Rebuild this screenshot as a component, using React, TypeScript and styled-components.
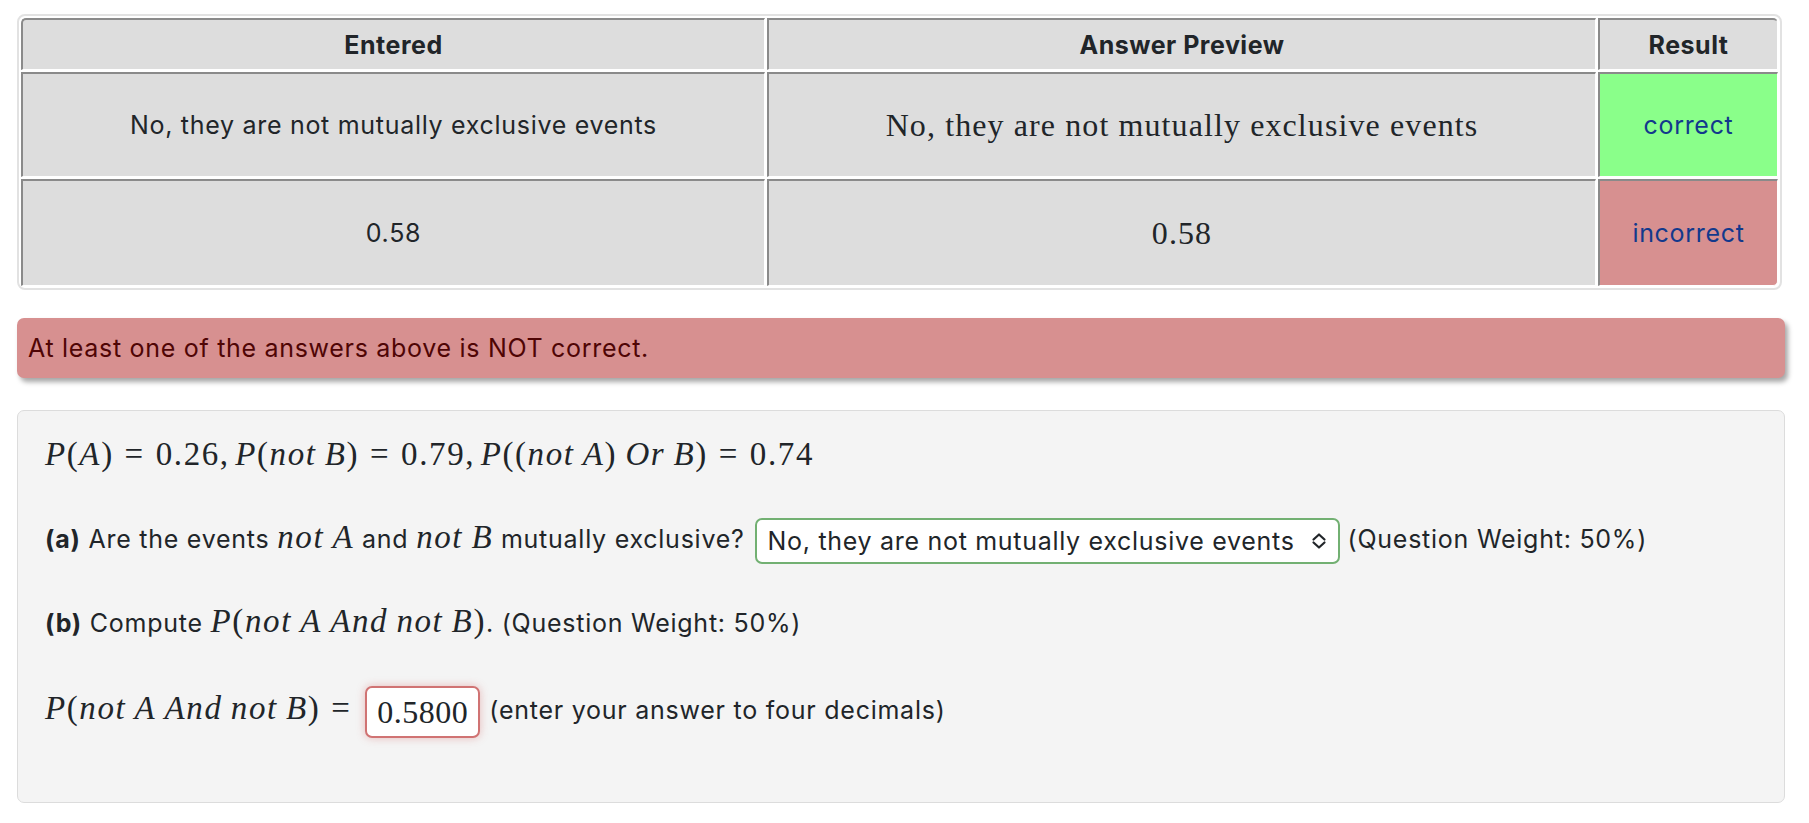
import styled, { createGlobalStyle } from "styled-components";

const GlobalStyle = createGlobalStyle`
  body {
    margin: 0;
    padding: 14px 0 0 17px;
    background: #ffffff;
    font-family: "Inter", "Liberation Sans", sans-serif;
    color: #212529;
  }
`;

const Page = styled.div`
  width: 1768px;
`;

const ResultsTable = styled.table`
  border-collapse: separate;
  border-spacing: 2px;
  border: 2px solid #e2e2e2;
  border-radius: 8px;
  width: 1765px;
  table-layout: fixed;
`;

const HeadCell = styled.th<{ $w?: number }>`
  width: ${(p) => (p.$w ? `${p.$w}px` : "auto")};
  height: 52px;
  padding: 0;
  background: #dddddd;
  border-top: 2px solid #8a8a8a;
  border-left: 2px solid #8a8a8a;
  border-right: 1px solid #ffffff;
  border-bottom: 1px solid #ffffff;
  font-size: 25px;
  letter-spacing: 0.5px;
  font-weight: 700;
  text-align: center;
  box-sizing: border-box;

  &:first-child {
    border-top-left-radius: 5px;
  }
  &:last-child {
    border-top-right-radius: 5px;
  }
`;

const Cell = styled.td<{ $h: number; $bg?: string; $serif?: boolean }>`
  height: ${(p) => p.$h}px;
  padding: 0;
  background: ${(p) => p.$bg || "#dddddd"};
  border-top: 2px solid #8a8a8a;
  border-left: 2px solid #8a8a8a;
  border-right: 1px solid #ffffff;
  border-bottom: 1px solid #ffffff;
  text-align: center;
  box-sizing: border-box;
  font-family: ${(p) =>
    p.$serif ? `"Liberation Serif", serif` : `"Inter", "Liberation Sans", sans-serif`};
  font-size: ${(p) => (p.$serif ? "32px" : "25px")};
  letter-spacing: ${(p) => (p.$serif ? "1.1px" : "0.7px")};
  color: ${(p) => (p.$bg ? "#12398c" : "#212529")};
`;

const LastRow = styled.tr`
  td:last-child {
    border-bottom-right-radius: 5px;
  }
`;

const Alert = styled.div`
  margin-top: 28px;
  height: 60px;
  box-sizing: border-box;
  padding: 0 11px;
  display: flex;
  align-items: center;
  background: #d79090;
  color: #4f0505;
  border-radius: 7px;
  box-shadow: 3px 4px 5px rgba(0, 0, 0, 0.35);
  font-size: 25px;
  letter-spacing: 0.7px;
`;

const Well = styled.div`
  margin-top: 32px;
  height: 393px;
  box-sizing: border-box;
  padding: 20px 27px 0;
  background: #f4f4f4;
  border: 1px solid #dcdcdc;
  border-radius: 7px;
  display: flex;
  flex-direction: column;
`;

const Line = styled.div<{ $h: number; $gap?: number }>`
  height: ${(p) => p.$h}px;
  margin-top: ${(p) => p.$gap || 0}px;
  display: flex;
  align-items: center;
  font-size: 25px;
  letter-spacing: 0.75px;
  white-space: nowrap;
`;

const Math = styled.span`
  font-family: "Liberation Serif", serif;
  font-size: 33px;
  letter-spacing: 1.6px;
`;

const Mi = styled.i`
  font-style: italic;
`;

const Rel = styled.span`
  margin: 0 0.33em;
`;

const Comma = styled.span`
  margin-right: 0.1667em;
`;

const Sp = styled.span`
  display: inline-block;
  width: 0.25em;
`;

const Label = styled.b`
  font-weight: 700;
`;

const SelectWrap = styled.span`
  position: relative;
  display: inline-block;
  vertical-align: middle;
  margin: 0 8px 0 10px;
`;

const Select = styled.select`
  appearance: none;
  width: 585px;
  height: 46px;
  box-sizing: border-box;
  padding: 0 40px 0 11px;
  background: #ffffff;
  border: 2px solid #72b072;
  border-radius: 7px;
  font-family: "Inter", "Liberation Sans", sans-serif;
  font-size: 25px;
  letter-spacing: 0.7px;
  color: #212529;
`;

const SelectIcon = styled.svg`
  position: absolute;
  right: 12px;
  top: 14px;
  width: 18px;
  height: 18px;
  pointer-events: none;
`;

const AnswerInput = styled.input`
  width: 115px;
  height: 52px;
  box-sizing: border-box;
  margin: 0 9px 0 3px;
  vertical-align: middle;
  text-align: center;
  background: #ffffff;
  border: 2px solid #d07373;
  border-radius: 7px;
  box-shadow: 0 0 8px rgba(205, 80, 80, 0.35);
  font-family: "Liberation Serif", serif;
  font-size: 32px;
  letter-spacing: 0.5px;
  color: #212529;
  padding: 0;
`;

const notA = (
  <>
    <Mi>not</Mi>
    <Sp />
    <Mi>A</Mi>
  </>
);

const notB = (
  <>
    <Mi>not</Mi>
    <Sp />
    <Mi>B</Mi>
  </>
);

const bothNot = (
  <>
    <Mi>P</Mi>(<Mi>not</Mi>
    <Sp />
    <Mi>A</Mi>
    <Sp />
    <Mi>And</Mi>
    <Sp />
    <Mi>not</Mi>
    <Sp />
    <Mi>B</Mi>)
  </>
);

const App = () => {
  return (
    <Page>
      <GlobalStyle />
      <ResultsTable>
        <thead>
          <tr>
            <HeadCell $w={744}>Entered</HeadCell>
            <HeadCell $w={829}>Answer Preview</HeadCell>
            <HeadCell>Result</HeadCell>
          </tr>
        </thead>
        <tbody>
          <tr>
            <Cell $h={105}>No, they are not mutually exclusive events</Cell>
            <Cell $h={105} $serif>
              No, they are not mutually exclusive events
            </Cell>
            <Cell $h={105} $bg="#8aff8a">
              correct
            </Cell>
          </tr>
          <LastRow>
            <Cell $h={107}>0.58</Cell>
            <Cell $h={107} $serif>
              0.58
            </Cell>
            <Cell $h={107} $bg="#d79090">
              incorrect
            </Cell>
          </LastRow>
        </tbody>
      </ResultsTable>

      <Alert>At least one of the answers above is NOT correct.</Alert>

      <Well>
        <Line $h={46}>
          <Math>
            <Mi>P</Mi>(<Mi>A</Mi>)<Rel>=</Rel>0.26<Comma>,</Comma>
            <Mi>P</Mi>({notB})<Rel>=</Rel>0.79<Comma>,</Comma>
            <Mi>P</Mi>(({notA})<Sp />
            <Mi>Or</Mi>
            <Sp />
            <Mi>B</Mi>)<Rel>=</Rel>0.74
          </Math>
        </Line>

        <Line $h={46} $gap={41}>
          <span>
            <Label>(a)</Label> Are the events <Math>{notA}</Math> and{" "}
            <Math>{notB}</Math> mutually exclusive?
            <SelectWrap>
              <Select defaultValue="no">
                <option value="no">No, they are not mutually exclusive events</option>
                <option value="yes">Yes, they are mutually exclusive events</option>
              </Select>
              <SelectIcon viewBox="0 0 18 18" fill="none" stroke="#212529" strokeWidth="2.2" strokeLinecap="round" strokeLinejoin="round">
                <path d="M3.5 7.5 L9 2.5 L14.5 7.5" />
                <path d="M3.5 10.5 L9 15.5 L14.5 10.5" />
              </SelectIcon>
            </SelectWrap>
            (Question Weight: 50%)
          </span>
        </Line>

        <Line $h={46} $gap={34}>
          <span>
            <Label>(b)</Label> Compute <Math>{bothNot}</Math>. (Question Weight: 50%)
          </span>
        </Line>

        <Line $h={52} $gap={42}>
          <span>
            <Math>
              {bothNot}
              <Rel>=</Rel>
            </Math>
            <AnswerInput readOnly value="0.5800" />
            (enter your answer to four decimals)
          </span>
        </Line>
      </Well>
    </Page>
  );
};

export default App;
